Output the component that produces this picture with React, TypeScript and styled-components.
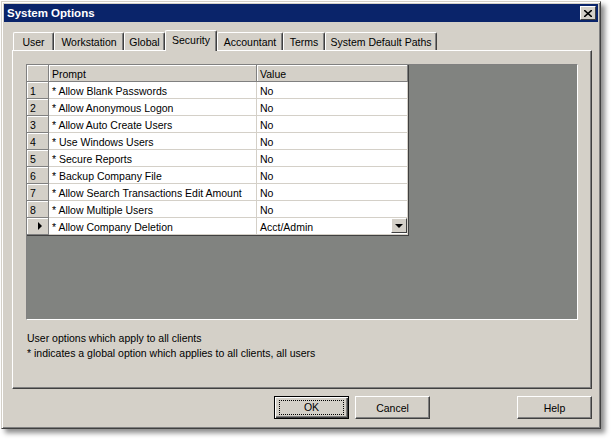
import React from 'react';
import styled, { createGlobalStyle } from 'styled-components';

const GlobalStyle = createGlobalStyle`
  html, body {
    margin: 0;
    padding: 0;
    background: #ffffff;
  }
  body {
    font-family: "Liberation Sans", Arial, sans-serif;
    font-size: 10.5px;
    color: #000000;
  }
`;

const Page = styled.div`
  padding: 1px 0 0 1px;
  width: 615px;
  height: 443px;
  box-sizing: border-box;
`;

const Window = styled.div`
  width: 600px;
  height: 428px;
  box-sizing: border-box;
  background: #d4d0c8;
  border-top: 1px solid #d4d0c8;
  border-left: 1px solid #d4d0c8;
  border-right: 1px solid #404040;
  border-bottom: 1px solid #404040;
  padding: 2px;
  display: flex;
  flex-direction: column;
  box-shadow: inset 1px 1px 0 #ffffff, inset -1px -1px 0 #808080, 4px 4px 5px rgba(0, 0, 0, 0.45);
`;

const TitleBar = styled.div`
  height: 18px;
  background: #0a246a;
  display: flex;
  align-items: center;
  justify-content: space-between;
  padding: 0 2px 0 3px;
`;

const Title = styled.span`
  color: #ffffff;
  font-weight: bold;
  font-size: 11.5px;
`;

const CloseButton = styled.div`
  width: 16px;
  height: 14px;
  box-sizing: border-box;
  background: #d4d0c8;
  border-top: 1px solid #ffffff;
  border-left: 1px solid #ffffff;
  border-right: 1px solid #404040;
  border-bottom: 1px solid #404040;
  display: flex;
  align-items: center;
  justify-content: center;
`;

const Body = styled.div`
  display: flex;
  flex-direction: column;
  padding: 0 6px 0 8px;
`;

const TabStrip = styled.div`
  display: flex;
  align-items: flex-end;
  height: 20px;
  margin-top: 8px;
  padding-left: 1px;
  position: relative;
  z-index: 1;
`;

const Tab = styled.div<{ $width: number; $active?: boolean }>`
  width: ${(p) => p.$width}px;
  height: ${(p) => (p.$active ? 21 : 18)}px;
  margin-bottom: ${(p) => (p.$active ? -1 : 0)}px;
  box-sizing: border-box;
  background: #d4d0c8;
  border-top: 1px solid #ffffff;
  border-left: 1px solid #ffffff;
  border-right: 1px solid #404040;
  border-radius: 2px 2px 0 0;
  box-shadow: inset -1px 0 0 #808080;
  display: flex;
  justify-content: center;
  padding-top: 3px;
  white-space: nowrap;
`;

const TabPanel = styled.div`
  height: 339px;
  box-sizing: border-box;
  border-top: 1px solid #ffffff;
  border-left: 1px solid #ffffff;
  border-right: 1px solid #404040;
  border-bottom: 1px solid #404040;
  box-shadow: inset -1px -1px 0 #808080;
  padding: 13px 13px 0 13px;
  display: flex;
  flex-direction: column;
`;

const GridArea = styled.div`
  height: 256px;
  box-sizing: border-box;
  background: #818380;
  border-top: 1px solid #808080;
  border-left: 1px solid #808080;
  border-right: 1px solid #ffffff;
  border-bottom: 1px solid #ffffff;
`;

const Table = styled.div`
  width: 381px;
  display: grid;
  grid-template-columns: 22px 208px 151px;
  grid-auto-rows: 17px;
  background: #ffffff;
  border-right: 1px solid #404040;
  border-bottom: 1px solid #404040;
`;

const HeadCell = styled.div`
  background: #d4d0c8;
  box-sizing: border-box;
  border-right: 1px solid #808080;
  border-bottom: 1px solid #808080;
  box-shadow: inset 1px 1px 0 #ffffff;
  padding: 3px 0 0 3px;
  line-height: 13px;
  white-space: nowrap;
  position: relative;
`;

const Cell = styled.div`
  box-sizing: border-box;
  border-right: 1px solid #d4d0c8;
  border-bottom: 1px solid #d4d0c8;
  padding: 3px 0 0 3px;
  line-height: 13px;
  white-space: nowrap;
  display: flex;
  justify-content: space-between;
`;

const Pointer = styled.span`
  width: 0;
  height: 0;
  border-top: 4px solid transparent;
  border-bottom: 4px solid transparent;
  border-left: 4px solid #000000;
  position: absolute;
  left: 11px;
  top: 4px;
`;

const DropButton = styled.div`
  width: 16px;
  height: 15px;
  box-sizing: border-box;
  margin-top: -3px;
  background: #d4d0c8;
  border-top: 1px solid #ffffff;
  border-left: 1px solid #ffffff;
  border-right: 1px solid #404040;
  border-bottom: 1px solid #404040;
  display: flex;
  align-items: center;
  justify-content: center;
`;

const DownArrow = styled.span`
  width: 0;
  height: 0;
  border-left: 4px solid transparent;
  border-right: 4px solid transparent;
  border-top: 4px solid #000000;
`;

const Notes = styled.div`
  margin-top: 11px;
  line-height: 15px;
  padding-left: 1px;
`;

const ButtonRow = styled.div`
  display: flex;
  justify-content: flex-end;
  gap: 6px;
  margin-top: 7px;
`;

const Button = styled.div<{ $default?: boolean; $spaced?: boolean }>`
  width: 75px;
  height: 23px;
  box-sizing: border-box;
  display: flex;
  align-items: center;
  justify-content: center;
  background: #d4d0c8;
  margin-left: ${(p) => (p.$spaced ? 81 : 0)}px;
  border: 1px solid;
  box-shadow: ${(p) =>
    p.$default
      ? 'inset 1px 1px 0 #ffffff, inset -1px -1px 0 #404040, inset -2px -2px 0 #808080'
      : 'inset -1px -1px 0 #808080'};
  border-top-color: ${(p) => (p.$default ? '#000000' : '#ffffff')};
  border-left-color: ${(p) => (p.$default ? '#000000' : '#ffffff')};
  border-right-color: ${(p) => (p.$default ? '#000000' : '#404040')};
  border-bottom-color: ${(p) => (p.$default ? '#000000' : '#404040')};
`;

const FocusRing = styled.span`
  width: 63px;
  height: 13px;
  border: 1px dotted #000000;
  display: flex;
  align-items: center;
  justify-content: center;
  line-height: 13px;
`;

const tabs = [
  { label: 'User', width: 41 },
  { label: 'Workstation', width: 70 },
  { label: 'Global', width: 41 },
  { label: 'Security', width: 52, active: true },
  { label: 'Accountant', width: 66 },
  { label: 'Terms', width: 42 },
  { label: 'System Default Paths', width: 112 },
];

const rows = [
  { prompt: '* Allow Blank Passwords', value: 'No' },
  { prompt: '* Allow Anonymous Logon', value: 'No' },
  { prompt: '* Allow Auto Create Users', value: 'No' },
  { prompt: '* Use Windows Users', value: 'No' },
  { prompt: '* Secure Reports', value: 'No' },
  { prompt: '* Backup Company File', value: 'No' },
  { prompt: '* Allow Search Transactions Edit Amount', value: 'No' },
  { prompt: '* Allow Multiple Users', value: 'No' },
  { prompt: '* Allow Company Deletion', value: 'Acct/Admin', current: true },
];

const App: React.FC = () => {
  return (
    <Page>
      <GlobalStyle />
      <Window>
        <TitleBar>
          <Title>System Options</Title>
          <CloseButton>
            <svg width="8" height="7" viewBox="0 0 8 7">
              <path d="M0 0 L8 7 M8 0 L0 7" stroke="#000" strokeWidth="1.6" />
            </svg>
          </CloseButton>
        </TitleBar>
        <Body>
          <TabStrip>
            {tabs.map((t) => (
              <Tab key={t.label} $width={t.width} $active={t.active}>
                {t.label}
              </Tab>
            ))}
          </TabStrip>
          <TabPanel>
            <GridArea>
              <Table>
                <HeadCell />
                <HeadCell>Prompt</HeadCell>
                <HeadCell>Value</HeadCell>
                {rows.map((r, i) => (
                  <React.Fragment key={r.prompt}>
                    <HeadCell>{r.current ? <Pointer /> : i + 1}</HeadCell>
                    <Cell>{r.prompt}</Cell>
                    <Cell>
                      {r.value}
                      {r.current && (
                        <DropButton>
                          <DownArrow />
                        </DropButton>
                      )}
                    </Cell>
                  </React.Fragment>
                ))}
              </Table>
            </GridArea>
            <Notes>
              User options which apply to all clients
              <br />* indicates a global option which applies to all clients, all users
            </Notes>
          </TabPanel>
          <ButtonRow>
            <Button $default>
              <FocusRing>OK</FocusRing>
            </Button>
            <Button>Cancel</Button>
            <Button $spaced>Help</Button>
          </ButtonRow>
        </Body>
      </Window>
    </Page>
  );
};

export default App;
